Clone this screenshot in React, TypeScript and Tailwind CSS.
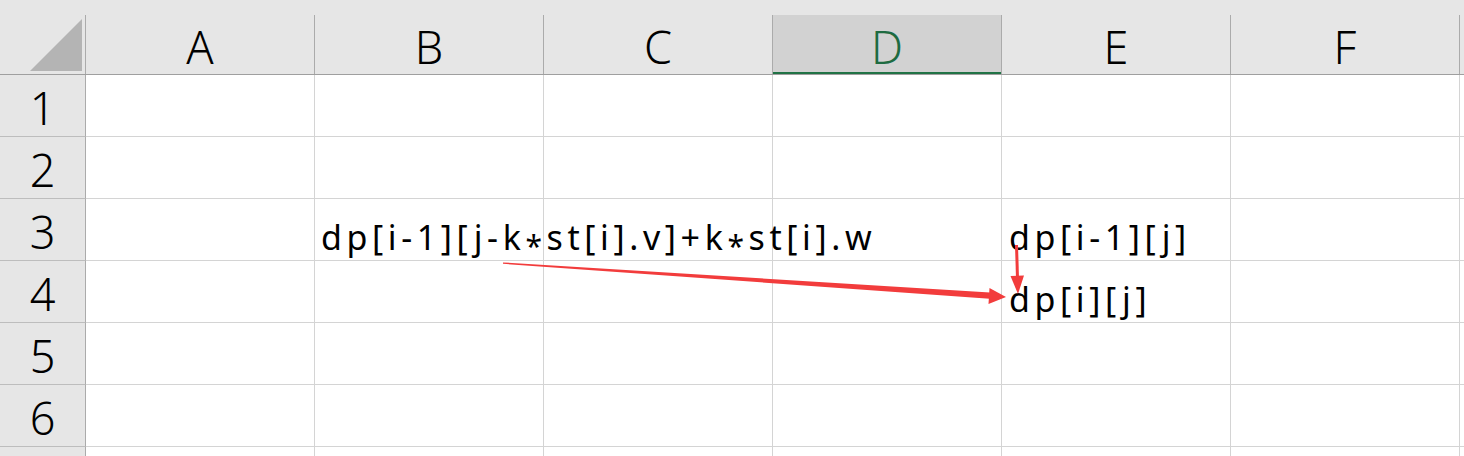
import React from "react";

const cols = ["A", "B", "C", "D", "E", "F"];
const rows = [1, 2, 3, 4, 5, 6, 7];

function Star() {
  return <span className="relative top-[7px] text-[30px]">*</span>;
}

function CellText({ left, children }: { left: string; children: React.ReactNode }) {
  return (
    <span
      className={
        left === "b"
          ? "absolute bottom-[6px] left-[6px] z-10 whitespace-nowrap text-[34px] leading-none tracking-[4.6px]"
          : "absolute bottom-[6px] left-[7px] z-10 whitespace-nowrap text-[34px] leading-none tracking-[4.6px]"
      }
    >
      {children}
    </span>
  );
}

export default function App() {
  return (
    <div
      className="relative h-[456px] w-[1464px] overflow-hidden bg-white text-black"
      style={{ fontFamily: '"Noto Sans", "Noto Sans CJK SC", sans-serif' }}
    >
      {/* top strip */}
      <div className="h-[15px] w-full bg-[#e6e6e6]" />
      {/* header row */}
      <div className="flex h-[60px] border-b border-[#9f9f9f] bg-[#e6e6e6]">
        <div className="relative h-[59px] w-[86px] shrink-0 border-r border-[#ababab]">
          <svg className="absolute left-0 top-0" width="86" height="59" viewBox="0 0 86 59">
            <polygon points="30,56 82,4 82,56" fill="#b4b4b4" />
          </svg>
        </div>
        {cols.map((c) => (
          <div
            key={c}
            className={
              c === "D"
                ? "flex h-[59px] w-[229px] shrink-0 items-start justify-center border-r border-[#ababab] bg-[#d2d2d2] pt-[9px] text-[45px] font-light leading-none text-[#1e6b41] shadow-[inset_0_-2px_0_#217346]"
                : "flex h-[59px] w-[229px] shrink-0 items-start justify-center border-r border-[#ababab] pt-[9px] text-[45px] font-light leading-none"
            }
          >
            {c}
          </div>
        ))}
        <div className="h-[59px] flex-1" />
      </div>
      {/* rows */}
      {rows.map((r) => (
        <div key={r} className="flex">
          <div className="flex h-[62px] w-[86px] shrink-0 items-start justify-center border-r border-b border-[#ababab] border-b-[#bdbdbd] bg-[#e6e6e6] pt-[10px] text-[45px] font-light leading-none">
            {r < 7 ? r : ""}
          </div>
          {cols.map((c) => (
            <div
              key={c}
              className="relative h-[62px] w-[229px] shrink-0 border-r border-b border-[#d4d4d4] bg-white"
            >
              {r === 3 && c === "B" && (
                <CellText left="b">
                  dp[i-1][j-k<Star />st[i].v]+k<Star />st[i].w
                </CellText>
              )}
              {r === 3 && c === "E" && <CellText left="e">dp[i-1][j]</CellText>}
              {r === 4 && c === "E" && <CellText left="e">dp[i][j]</CellText>}
            </div>
          ))}
          <div className="h-[62px] flex-1 border-b border-[#d4d4d4]" />
        </div>
      ))}
      {/* arrows overlay */}
      <svg className="pointer-events-none absolute left-0 top-0 z-20" width="1464" height="456" viewBox="0 0 1464 456">
        <polygon points="503,262.4 990,292.6 989.6,298.8 503,263.8" fill="#f23c3c" />
        <polygon points="989.5,288 1006,297 988.5,304" fill="#f23c3c" />
        <polygon points="1015,245 1018,245 1019,278 1016,278" fill="#f23c3c" />
        <polygon points="1010.5,276 1024,275.5 1018,294" fill="#f23c3c" />
      </svg>
    </div>
  );
}
